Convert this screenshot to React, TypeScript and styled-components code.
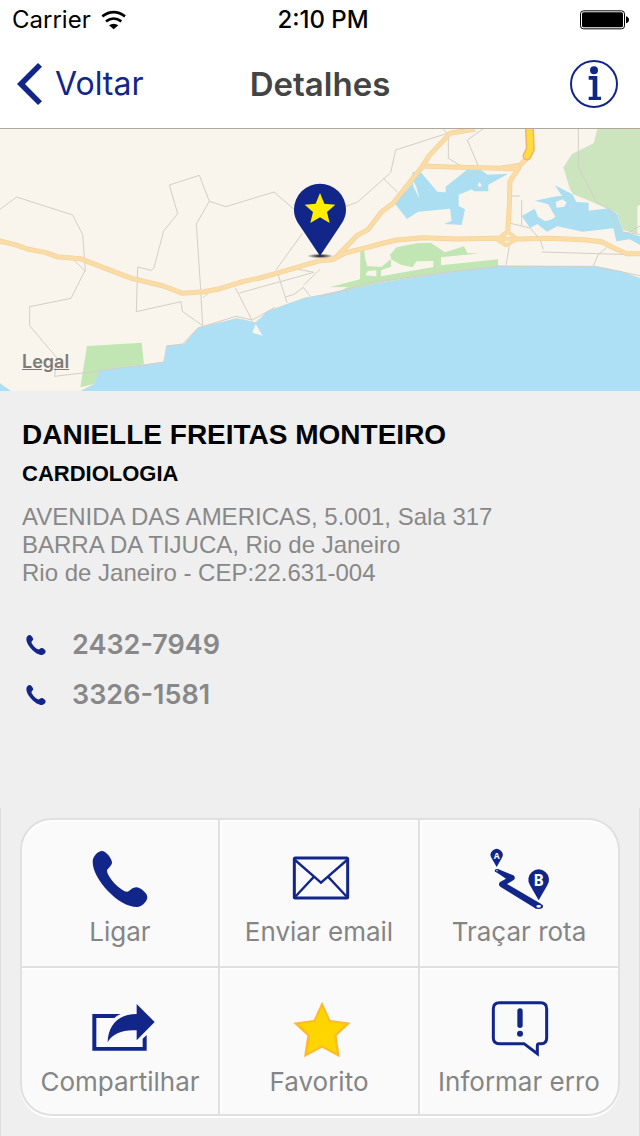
import React from "react";
import styled, { createGlobalStyle } from "styled-components";

const navy = "#12268a";
const line = "#e0e0e0";
const ui = `Inter, Roboto, "Liberation Sans", sans-serif`;
const helvetica = `"Liberation Sans", Arial, sans-serif`;

const GlobalStyle = createGlobalStyle`
  *, *::before, *::after { box-sizing: border-box; }
  body { margin: 0; background: #efefef; font-family: ${ui}; }
  h1, h2, p, ul { margin: 0; padding: 0; }
  button { margin: 0; padding: 0; border: 0; background: none; font-family: inherit; cursor: pointer; }
  svg { display: block; flex: none; overflow: visible; }
`;

const Screen = styled.div`
  display: flex;
  flex-direction: column;
  min-height: 100vh;
`;

const StatusBar = styled.div`
  display: grid;
  grid-template-columns: 1fr auto 1fr;
  align-items: center;
  height: 40px;
  padding: 0 12px;
  background: #fff;
  color: #000;
  font-size: 24px;
  line-height: 28px;
`;

const Carrier = styled.div`
  display: flex;
  align-items: center;
  gap: 10px;
`;

const Clock = styled.time`
  padding-left: 6px;
  font-weight: 500;
`;

const Battery = styled.div`
  display: flex;
  justify-content: flex-end;
`;

const NavBar = styled.header`
  display: grid;
  grid-template-columns: 1fr auto 1fr;
  align-items: center;
  height: 89px;
  padding: 0 16px;
  background: #fff;
  border-bottom: 1px solid #aca89c;
`;

const BackButton = styled.button`
  display: flex;
  align-items: center;
  gap: 12px;
  justify-self: start;
  color: ${navy};
  font-size: 32px;
  line-height: 40px;
`;

const Title = styled.h1`
  color: #444;
  font-size: 33px;
  line-height: 40px;
  font-weight: 600;
`;

const InfoButton = styled.button`
  justify-self: end;
  margin-right: 6px;
`;

const MapView = styled.section`
  position: relative;
  height: 262px;
  background: #f9f5ed;
`;

const MapDrawing = styled.svg`
  width: 100%;
  height: 100%;
  overflow: hidden;
`;

const LegalLink = styled.a`
  position: absolute;
  left: 22px;
  bottom: 17px;
  color: #7c7b77;
  font-size: 18px;
  line-height: 24px;
  font-weight: 600;
`;

const Details = styled.main`
  padding: 28px 22px;
  font-family: ${helvetica};
`;

const Name = styled.h2`
  color: #000;
  font-size: 28px;
  line-height: 32px;
`;

const Specialty = styled.p`
  margin-top: 9px;
  color: #000;
  font-size: 22px;
  line-height: 28px;
  font-weight: 700;
`;

const Address = styled.p`
  margin-top: 15px;
  color: #888;
  font-size: 24px;
  line-height: 28px;
`;

const Phones = styled.ul`
  display: flex;
  flex-direction: column;
  gap: 18px;
  margin-top: 42px;
  list-style: none;
`;

const PhoneLink = styled.a`
  display: inline-flex;
  align-items: center;
  gap: 26px;
  padding-left: 4px;
  color: #888;
  font-family: ${ui};
  font-size: 27px;
  line-height: 32px;
  font-weight: 600;
  text-decoration: none;
`;

const ActionPanel = styled.footer`
  margin-top: auto;
  padding: 10px 19px 20px;
  border: solid #dedede;
  border-width: 0 1px;
`;

const ActionGrid = styled.div`
  display: grid;
  grid-template-columns: repeat(3, 1fr);
  border-radius: 32px;
  box-shadow: 0 2px 0 #fff;
`;

const ActionButton = styled.button`
  display: flex;
  flex-direction: column;
  align-items: center;
  gap: 8px;
  padding: 30px 0 16px;
  border: solid ${line};
  border-width: 0 2px 2px 0;
  background: #fafafa;
  box-shadow: inset 2px 2px 0 #fff;
  color: #858585;
  font-size: 26px;
  line-height: 32px;

  &:nth-child(-n + 3) {
    padding: 28px 0 18px;
    border-top-width: 2px;
  }
  &:nth-child(3n + 1) {
    border-left-width: 2px;
    box-shadow: inset 0 2px 0 #fff;
  }
  &:nth-child(1) { border-top-left-radius: 32px; }
  &:nth-child(3) { border-top-right-radius: 32px; }
  &:nth-child(4) { border-bottom-left-radius: 32px; }
  &:nth-child(6) { border-bottom-right-radius: 32px; }
`;

const handset =
  "M278 185C278 167 296 153 306 153C318 153 336 176 336 188C336 197 321 206 321 212C322 231 361 273 381 275C389 275 395 262 409 262C421 262 442 279 442 292C442 304 426 321 411 321C356 321 278 238 278 185Z";

function WifiIcon() {
  return (
    <svg width="26" height="20" viewBox="300 30 78 60" fill="none" stroke="#000" strokeWidth="8" aria-hidden="true">
      <path d="M304 49Q338 24 372 49" />
      <path d="M315 64Q338 47 361 64" />
      <path d="M324 76Q338 66 352 76L338 88Z" fill="#000" stroke="none" />
    </svg>
  );
}

function BatteryIcon() {
  return (
    <svg width="49" height="20" viewBox="777 32 147 60" aria-label="Bateria">
      <rect x="781.5" y="34.5" width="132" height="54" rx="9" fill="none" stroke="#000" strokeWidth="3" />
      <rect x="786" y="39" width="123" height="45" rx="5" />
      <path d="M918 51Q927 54 927 61.500Q927 69 918 72Z" />
    </svg>
  );
}

function BackIcon() {
  return (
    <svg width="27" height="42" viewBox="48 189 81 126" aria-hidden="true">
      <path d="M51 252L114 189L126 200L75 252L126 304L114 315Z" fill={navy} />
    </svg>
  );
}

function InfoIcon() {
  return (
    <svg width="48" height="48" viewBox="0 0 144 144" aria-hidden="true">
      <circle cx="72" cy="72" r="69" fill="none" stroke={navy} strokeWidth="6" />
      <circle cx="72" cy="31" r="12" fill={navy} />
      <path d="M56 48H82V110H93V120H56V110H68V59H56Z" fill={navy} />
    </svg>
  );
}

const highways = [
  "M-10 343L45 356L82 369L138 380L170 392L240 398L395 457L490 480L548 502L611 497L660 488L730 466L780 456L850 436L960 404L998 401L1035 381L1100 365L1140 354L1190 342L1270 335L1370 339L1490 337L1530 340L1650 337L1750 341L1805 347L1840 365L1880 383H1930",
  "M1005 397L1072 328L1105 310L1145 257L1180 231L1270 118L1285 92L1350 22L1425 9",
  "M1262 120L1350 123L1500 127L1560 118L1585 92M1510 128H1556L1530 165L1528 240L1523 320L1548 338M1523 318L1494 340L1518 356L1550 338",
];

function CoastMap() {
  return (
    <MapDrawing viewBox="0 9 1920 786" preserveAspectRatio="xMidYMid slice" role="img" aria-label="Mapa da Barra da Tijuca">
      <path
        fill="#ade0f5"
        stroke="#c3d9dd"
        strokeWidth="3"
        d="M240 797L281 776L300 733L491 710L500 660L552 656L594 606L711 578L767 590L804 556L915 516L960 508L1120 474L1340 440L1495 420L1780 421L1860 436L1925 459V800H240Z"
      />
      <path fill="#ade0f5" d="M0 772L36 797H0Z" />
      <path fill="#f9f5ed" d="M767 594L788 629L757 620Z" />
      <path fill="#c2e6b3" d="M261 660L425 650L432 715L300 733L281 774L241 784Z" />
      <path
        fill="#c2e6b3"
        d="M988 484L1080 460L1081 376L1092 370L1096 400L1102 420L1144 423L1174 398L1170 386L1190 364L1250 352L1292 350L1335 379L1392 361L1402 381L1440 382L1323 394L1323 418L1494 400V421L1340 439L1150 468L1015 497L1044 483ZM1173 400V422L1143 433V451L1300 423V405L1249 406L1238 424L1202 416ZM1103 435L1096 448L1129 451V433Z"
        fillRule="evenodd"
      />
      <path fill="#cce5bf" d="M1793 5L1781 52L1716 84L1690 124L1710 190L1720 205L1820 246L1852 262L1868 312L1912 324V240L1925 235V5Z" />
      <g fill="#abdef1">
        <path d="M1238 138L1264 140L1312 197L1337 199V182L1400 132L1440 130L1463 146L1525 143L1465 176V196H1422L1416 190L1376 206V240L1395 250L1385 297L1333 294L1355 284L1350 248L1254 257L1221 279L1184 232L1235 176ZM1236 158L1241 184L1259 218L1249 182Z" fillRule="evenodd" />
        <path d="M1605 224L1670 211L1686 210L1665 178L1717 205L1729 228L1766 230V254L1827 247L1852 264L1869 316L1925 332V360L1889 340L1849 346L1840 307L1748 317L1672 301L1641 317L1612 294L1590 306L1565 270L1604 248L1614 272L1636 286L1656 280L1666 272L1645 235ZM1667 228L1670 245L1692 242L1700 230L1688 220Z" fillRule="evenodd" />
      </g>
      <path fill="#f9f5ed" d="M1437 168L1445 176L1441 183L1433 180Z" />
      <g fill="none" stroke="#d2cfc7" strokeWidth="3">
        <path d="M0 250L50 213L218 267L248 326L256 432L213 517L89 542V599L170 695L164 751L300 735" />
        <path d="M220 400L256 436M300 733L425 718L491 708M500 660L548 654L594 606L708 571L757 582L825 544" />
        <path d="M435 462L414 456M462 425L454 433L413 423L409 557L543 527L547 556L608 599L602 490L589 294L628 226L598 148L508 177L533 263L491 315L462 425" />
        <path d="M628 226L678 242L822 198L882 250M907 322L828 432M832 438L861 530M718 501L942 439L895 430M706 485L757 585M857 513L882 505L910 484L930 510M960 430L910 478M610 515L625 501" />
        <path d="M1038 241L1073 228L1172 140L1187 72L1342 22M1330 9L1345 26V97L1380 118M1450 8L1402 42L1434 118M1150 157L1192 198" />
        <path d="M1735 5V124L1792 232L1825 248L1860 318L1920 325M1535 210H1560M1565 222V297M1532 292L1590 306L1620 340L1630 370M1625 378L1860 385H1880M1528 360L1518 418M1820 365L1795 385L1780 420L1925 450M1885 320L1920 300" />
        <path d="M960 512L1120 468L1330 440L1495 421L1780 422" />
      </g>
      <g fill="none" stroke="#f7d198" strokeWidth="15" strokeLinejoin="round">
        {highways.map((d) => (
          <path key={d} d={d} />
        ))}
      </g>
      <g fill="none" stroke="#fadca6" strokeWidth="11" strokeLinejoin="round">
        {highways.map((d) => (
          <path key={d} d={d} />
        ))}
      </g>
      <path fill="#f9f5ed" d="M1516 333L1524 325L1532 333ZM1512 345H1530L1520 350Z" />
      <g fill="none" strokeLinecap="round" strokeLinejoin="round">
        <path d="M1588 0L1591 70L1581 90" stroke="#f5b073" strokeWidth="27" />
        <path d="M1588 0L1591 70L1581 90" stroke="#ffdd3c" strokeWidth="18" />
      </g>
      <defs>
        <radialGradient id="pin-shadow">
          <stop offset="0" stopColor="#000" />
          <stop offset="1" stopColor="#000" stopOpacity="0" />
        </radialGradient>
      </defs>
      <ellipse cx="961" cy="390" rx="40" ry="7" fill="url(#pin-shadow)" />
      <path fill={navy} d="M960 390L900 300C889 284 882 270 882 251A78 78 0 0 1 1038 251C1038 270 1031 284 1020 300Z" />
      <path fill="#fe0" d="M960 201L973 233L1006 236L981 258L989 291L960 274L931 291L939 258L914 236L947 233Z" />
    </MapDrawing>
  );
}

function SmallPhoneIcon() {
  return (
    <svg width="20" height="20" viewBox="277 152 166 170" aria-hidden="true">
      <path d={handset} fill={navy} />
    </svg>
  );
}

function ActionIcon({ viewBox, children }: { viewBox: string; children: React.ReactNode }) {
  return (
    <svg width="72" height="60" viewBox={viewBox} fill={navy} aria-hidden="true">
      {children}
    </svg>
  );
}

const actions = [
  {
    label: "Ligar",
    icon: (
      <ActionIcon viewBox="252 144 216 180">
        <path d={handset} />
      </ActionIcon>
    ),
  },
  {
    label: "Enviar email",
    icon: (
      <ActionIcon viewBox="849 144 216 180">
        <g fill="none" stroke={navy}>
          <rect x="883" y="174" width="160" height="120" rx="3" strokeWidth="9" />
          <path d="M885 180L963 248L1041 180M885 291L940 232M1041 291L986 232" strokeWidth="7" />
        </g>
      </ActionIcon>
    ),
  },
  {
    label: "Traçar rota",
    icon: (
      <ActionIcon viewBox="489 144 216 180">
        <path d="M530 201L515 175A18 18 0 1 1 545 175Z" />
        <path d="M656 301L630 256A31 31 0 1 1 682 256Z" />
        <ellipse cx="531" cy="212" rx="7" ry="5" />
        <ellipse cx="656" cy="319" rx="13" ry="8" />
        <path d="M534 207L580 226Q588 232 582 239L561 252L664 312L648 326L541 260Q533 254 540 246L558 236L528 216Z" />
        <ellipse cx="656" cy="319" rx="7" ry="4" fill="#fff" />
        <ellipse cx="531" cy="212" rx="3" ry="2" fill="#b7bedd" />
        <g fill="#fff" fontFamily="Open Sans, sans-serif" fontWeight="700" textAnchor="middle">
          <text x="530" y="177" fontSize="26">A</text>
          <text x="656" y="257" fontSize="46">B</text>
        </g>
      </ActionIcon>
    ),
  },
  {
    label: "Compartilhar",
    icon: (
      <ActionIcon viewBox="252 114 216 180">
        <path d="M277 162H362Q351 167 343 174H289V261H428V236L440 225V272H277Z" />
        <path d="M410 132L464 186L410 241V211C372 208 337 219 323 247C324 197 354 162 410 162Z" />
      </ActionIcon>
    ),
  },
  {
    label: "Favorito",
    icon: (
      <ActionIcon viewBox="849 114 216 180">
        <path d="M966 125L991 180L1052 188L1010 227L1019 292L966 263L912 292L922 227L880 188L941 180Z" fill="#ffb92a" />
        <path d="M966 140L987 185L1037 192L1002 225L1010 280L966 256L922 280L930 225L895 192L945 185Z" fill="#ffd500" />
      </ActionIcon>
    ),
  },
  {
    label: "Informar erro",
    icon: (
      <ActionIcon viewBox="489 114 216 180">
        <path
          d="M538 128H662Q680 128 680 146V234Q680 251 664 251H657Q652 251 652 257V281L612 251H538Q520 251 520 234V146Q520 128 538 128Z"
          fill="none"
          stroke={navy}
          strokeWidth="9"
        />
        <rect x="592" y="145" width="16" height="59" rx="8" />
        <circle cx="600" cy="221" r="9" />
      </ActionIcon>
    ),
  },
];

const phones = ["2432-7949", "3326-1581"];

export default function App() {
  return (
    <>
      <GlobalStyle />
      <Screen>
        <StatusBar>
          <Carrier>
            Carrier
            <WifiIcon />
          </Carrier>
          <Clock>2:10 PM</Clock>
          <Battery>
            <BatteryIcon />
          </Battery>
        </StatusBar>
        <NavBar>
          <BackButton type="button">
            <BackIcon />
            Voltar
          </BackButton>
          <Title>Detalhes</Title>
          <InfoButton type="button" aria-label="Informações">
            <InfoIcon />
          </InfoButton>
        </NavBar>
        <MapView>
          <CoastMap />
          <LegalLink href="#legal">Legal</LegalLink>
        </MapView>
        <Details>
          <Name>DANIELLE FREITAS MONTEIRO</Name>
          <Specialty>CARDIOLOGIA</Specialty>
          <Address>
            AVENIDA DAS AMERICAS, 5.001, Sala 317
            <br />
            BARRA DA TIJUCA, Rio de Janeiro
            <br />
            Rio de Janeiro - CEP:22.631-004
          </Address>
          <Phones>
            {phones.map((phone) => (
              <li key={phone}>
                <PhoneLink href={`tel:${phone}`}>
                  <SmallPhoneIcon />
                  {phone}
                </PhoneLink>
              </li>
            ))}
          </Phones>
        </Details>
        <ActionPanel>
          <ActionGrid>
            {actions.map(({ label, icon }) => (
              <ActionButton key={label} type="button">
                {icon}
                {label}
              </ActionButton>
            ))}
          </ActionGrid>
        </ActionPanel>
      </Screen>
    </>
  );
}
